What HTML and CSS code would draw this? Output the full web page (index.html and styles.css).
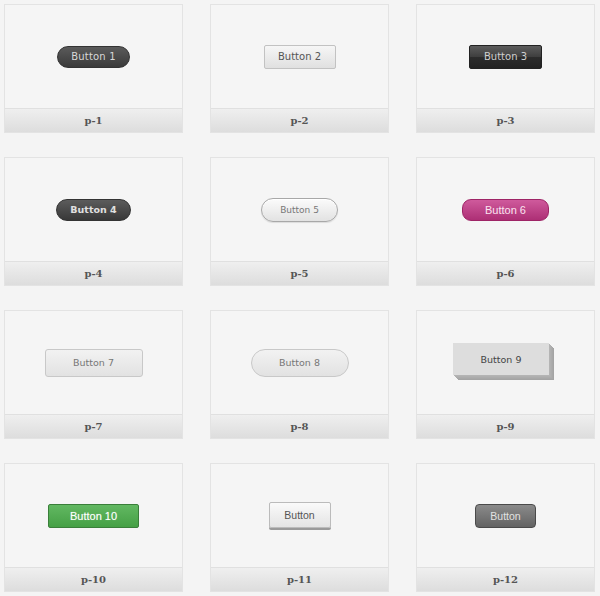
FILE: index.html
```html
<!DOCTYPE html>
<html lang="en">
<head>
    <meta charset="UTF-8">
    <title>Buttons</title>
    <link rel="stylesheet" href="styles.css">
</head>
<body>
    <div class="grille">
        <div class="carte">
            <div class="scene"><span class="btn b1">Button 1</span></div>
            <div class="legende">p-1</div>
        </div>
        <div class="carte">
            <div class="scene"><span class="btn b2">Button 2</span></div>
            <div class="legende">p-2</div>
        </div>
        <div class="carte">
            <div class="scene"><span class="btn b3">Button 3</span></div>
            <div class="legende">p-3</div>
        </div>
        <div class="carte">
            <div class="scene"><span class="btn b4">Button 4</span></div>
            <div class="legende">p-4</div>
        </div>
        <div class="carte">
            <div class="scene"><span class="btn b5">Button 5</span></div>
            <div class="legende">p-5</div>
        </div>
        <div class="carte">
            <div class="scene"><span class="btn b6">Button 6</span></div>
            <div class="legende">p-6</div>
        </div>
        <div class="carte">
            <div class="scene"><span class="btn b7">Button 7</span></div>
            <div class="legende">p-7</div>
        </div>
        <div class="carte">
            <div class="scene"><span class="btn b8">Button 8</span></div>
            <div class="legende">p-8</div>
        </div>
        <div class="carte">
            <div class="scene"><span class="btn b9">Button 9</span></div>
            <div class="legende">p-9</div>
        </div>
        <div class="carte">
            <div class="scene"><span class="btn b10">Button 10</span></div>
            <div class="legende">p-10</div>
        </div>
        <div class="carte">
            <div class="scene"><span class="btn b11">Button</span></div>
            <div class="legende">p-11</div>
        </div>
        <div class="carte">
            <div class="scene"><span class="btn b12">Button</span></div>
            <div class="legende">p-12</div>
        </div>
    </div>
</body>
</html>
```

FILE: styles.css
```css
body{
    margin: 0;
    background-color: #f4f4f4;
    font-family: 'DejaVu Sans', sans-serif;
}
.grille{
    display: grid;
    grid-template-columns: repeat(3, 179px);
    column-gap: 27px;
    row-gap: 24px;
    padding: 4px 0 0 4px;
}
.carte{
    box-sizing: border-box;
    height: 129px;
    border: 1px solid #e3e3e3;
    background-color: #f5f5f5;
    display: flex;
    flex-direction: column;
}
.scene{
    height: 103px;
    display: flex;
    align-items: center;
    justify-content: center;
}
.legende{
    flex: 1;
    border-top: 1px solid #e0e0e0;
    background: linear-gradient(#efefef, #dddddd);
    font-family: 'DejaVu Serif', serif;
    font-weight: bold;
    font-size: 10px;
    color: #555;
    display: flex;
    align-items: center;
    justify-content: center;
}

/* boutons */
.btn{
    box-sizing: border-box;
    display: flex;
    align-items: center;
    justify-content: center;
    font-size: 10px;
    white-space: nowrap;
}
.b1{
    width: 73px;
    height: 22px;
    border-radius: 11px;
    background: linear-gradient(#5a5a5a, #3a3a3a);
    border: 1px solid #333;
    color: #d8d8d8;
    letter-spacing: 0.2px;
}
.b2{
    width: 72px;
    height: 24px;
    border-radius: 2px;
    border: 1px solid #c2c2c2;
    background: linear-gradient(#f6f6f6, #e0e0e0);
    color: #555;
}
.b3{
    width: 73px;
    height: 24px;
    border-radius: 2px;
    border: 1px solid #222;
    background: linear-gradient(#5c5c5c 0%, #3e3e3e 50%, #2c2c2c 51%, #222 100%);
    color: #cfcfcf;
}
.b4{
    width: 75px;
    height: 22px;
    border-radius: 11px;
    border: 1px solid #333;
    background: linear-gradient(#5c5c5c, #383838);
    color: #e0e0e0;
    font-weight: bold;
    font-size: 9.5px;
}
.b5{
    width: 77px;
    height: 24px;
    border-radius: 12px;
    border: 1px solid #a8a8a8;
    background: linear-gradient(#fbfbfb, #e2e2e2);
    box-shadow: inset 0 1px 0 #fff, 0 1px 1px rgba(0,0,0,0.1);
    color: #777;
    font-size: 9px;
}
.b6{
    width: 87px;
    height: 22px;
    border-radius: 9px;
    border: 1px solid #9e2466;
    background: linear-gradient(#cf5a9c, #ad2f75);
    color: #fbe3f0;
    font-family: 'Liberation Sans', sans-serif;
    font-size: 11px;
}
.b7{
    width: 98px;
    height: 28px;
    border-radius: 3px;
    border: 1px solid #c8c8c8;
    background: linear-gradient(#f2f2f2, #e2e2e2);
    color: #777;
    font-size: 9.5px;
}
.b8{
    width: 98px;
    height: 28px;
    border-radius: 14px;
    border: 1px solid #c8c8c8;
    background: linear-gradient(#f2f2f2, #e2e2e2);
    color: #777;
    font-size: 9.5px;
}
.b9{
    width: 96px;
    height: 32px;
    margin: 0 9px 7px 0;
    background-color: #dddddd;
    box-shadow: 1px 1px 0 #b4b4b4, 2px 2px 0 #b0b0b0, 3px 3px 0 #acacac, 4px 4px 0 #a8a8a8, 5px 5px 0 #a4a4a4;
    color: #444;
    font-size: 9.5px;
}
.b10{
    width: 91px;
    height: 24px;
    border-radius: 2px;
    border: 1px solid #3a7f3a;
    background: linear-gradient(#62b862, #45a045);
    color: #fff;
    font-family: 'Liberation Sans', sans-serif;
    font-size: 11px;
    text-shadow: 0 0 1px rgba(255,255,255,0.4);
}
.b11{
    width: 62px;
    height: 26px;
    margin-bottom: 2px;
    border-radius: 2px;
    border: 1px solid #bbb;
    background: linear-gradient(#fafafa, #e4e4e4);
    box-shadow: 0 2px 0 #9a9a9a;
    color: #555;
    font-family: 'Liberation Sans', sans-serif;
    font-size: 10.5px;
}
.b12{
    width: 61px;
    height: 24px;
    border-radius: 4px;
    border: 1px solid #4a4a4a;
    background: linear-gradient(#8a8a8a, #636363);
    color: #e2e2e2;
    font-family: 'Liberation Sans', sans-serif;
    font-size: 10.5px;
}
```
